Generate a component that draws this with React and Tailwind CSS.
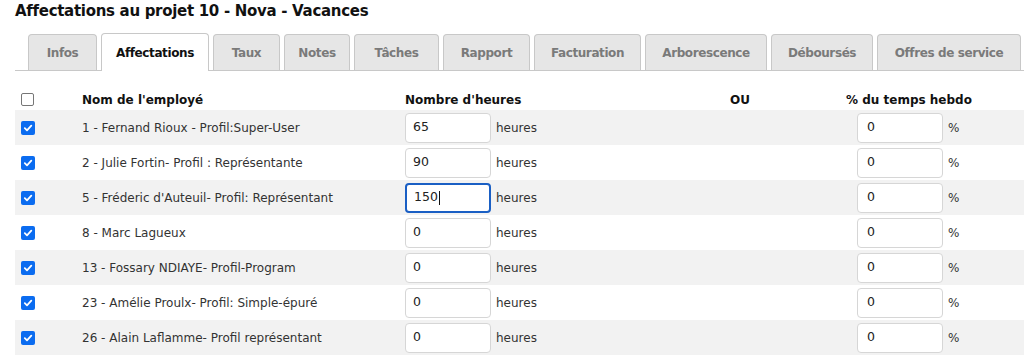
import React from "react";

const tabs = [
  ["Infos", 69],
  ["Affectations", 108],
  ["Taux", 67],
  ["Notes", 66],
  ["Tâches", 85],
  ["Rapport", 87],
  ["Facturation", 107],
  ["Arborescence", 122],
  ["Déboursés", 102],
  ["Offres de service", 144],
];

const rows = [
  ["1 - Fernand Rioux - Profil:Super-User", "65"],
  ["2 - Julie Fortin- Profil : Représentante", "90"],
  ["5 - Fréderic d'Auteuil- Profil: Représentant", "150", true],
  ["8 - Marc Lagueux", "0"],
  ["13 - Fossary NDIAYE- Profil-Program", "0"],
  ["23 - Amélie Proulx- Profil: Simple-épuré", "0"],
  ["26 - Alain Laflamme- Profil représentant", "0"],
];

function Check({ checked }) {
  if (checked) {
    return (
      <span className="flex h-[14px] w-[14px] items-center justify-center rounded-[2px] bg-[#0b6cf0]">
        <svg width="10" height="10" viewBox="0 0 10 10">
          <path d="M1.8 5.2 L4 7.3 L8.3 2.6" fill="none" stroke="white" strokeWidth="1.8" strokeLinecap="round" strokeLinejoin="round" />
        </svg>
      </span>
    );
  }
  return <span className="block h-[13px] w-[13px] rounded-[2px] border border-[#767676] bg-white" />;
}

export default function App() {
  return (
    <div className="h-[357px] w-[1024px] overflow-hidden bg-white text-[#222]" style={{ fontFamily: "'DejaVu Sans', Verdana, sans-serif" }}>
      <h1 className="pl-[15px] pt-[1px] text-[15px] font-bold leading-[20px] tracking-[-0.3px] text-[#111]">
        Affectations au projet 10 - Nova - Vacances
      </h1>
      <div className="ml-[15px] mt-[12px] flex h-[38px] items-end gap-[4px] border-b border-[#c8c8c8] pl-[13px]">
        {tabs.map(([t, w]) => {
          const active = t === "Affectations";
          return (
            <div
              key={t}
              style={{ width: w }}
              className={
                active
                  ? "-mb-px flex h-[38px] items-center justify-center rounded-t-[4px] border border-b-0 border-[#c8c8c8] bg-white text-[12px] font-bold tracking-[-0.4px] text-[#111]"
                  : "flex h-[36px] items-center justify-center rounded-t-[4px] border border-b-0 border-[#c8c8c8] bg-[#e6e6e6] text-[12px] font-bold tracking-[-0.4px] text-[#7a7a7a]"
              }
            >
              {t}
            </div>
          );
        })}
      </div>
      <div className="ml-[15px] mt-[18px] text-[12px]">
        <div className="flex h-[21px] items-center font-bold text-[#111]">
          <div className="w-[67px] pl-[6px]">
            <Check />
          </div>
          <div className="w-[323px]">Nom de l'employé</div>
          <div className="w-[325px]">Nombre d'heures</div>
          <div className="w-[116px]">OU</div>
          <div>% du temps hebdo</div>
        </div>
        {rows.map(([name, h, focus], i) => (
          <div key={i} className={"flex h-[35px] items-center " + (i % 2 === 0 ? "bg-[#f2f2f2]" : "bg-white")}>
            <div className="w-[67px] pl-[6px]">
              <Check checked />
            </div>
            <div className="w-[323px] text-[#333]">{name}</div>
            <div className="flex w-[325px] items-center">
              <div
                className={
                  "flex h-[30px] w-[86px] items-center rounded-[4px] bg-white pl-[7px] text-[12.5px] text-[#222] " +
                  (focus ? "border-2 border-[#1a5fc4] pl-[6px]" : "border border-[#d6d6d6]")
                }
              >
                {h}
                {focus && <span className="ml-px inline-block h-[14px] w-px bg-[#111]" />}
              </div>
              <span className="ml-[5px] text-[#333]">heures</span>
            </div>
            <div className="w-[116px]" />
            <div className="flex items-center pl-[11px]">
              <div className="flex h-[30px] w-[86px] items-center rounded-[4px] border border-[#d6d6d6] bg-white pl-[9px] text-[12.5px] text-[#222]">
                0
              </div>
              <span className="ml-[5px] text-[#333]">%</span>
            </div>
          </div>
        ))}
      </div>
    </div>
  );
}
